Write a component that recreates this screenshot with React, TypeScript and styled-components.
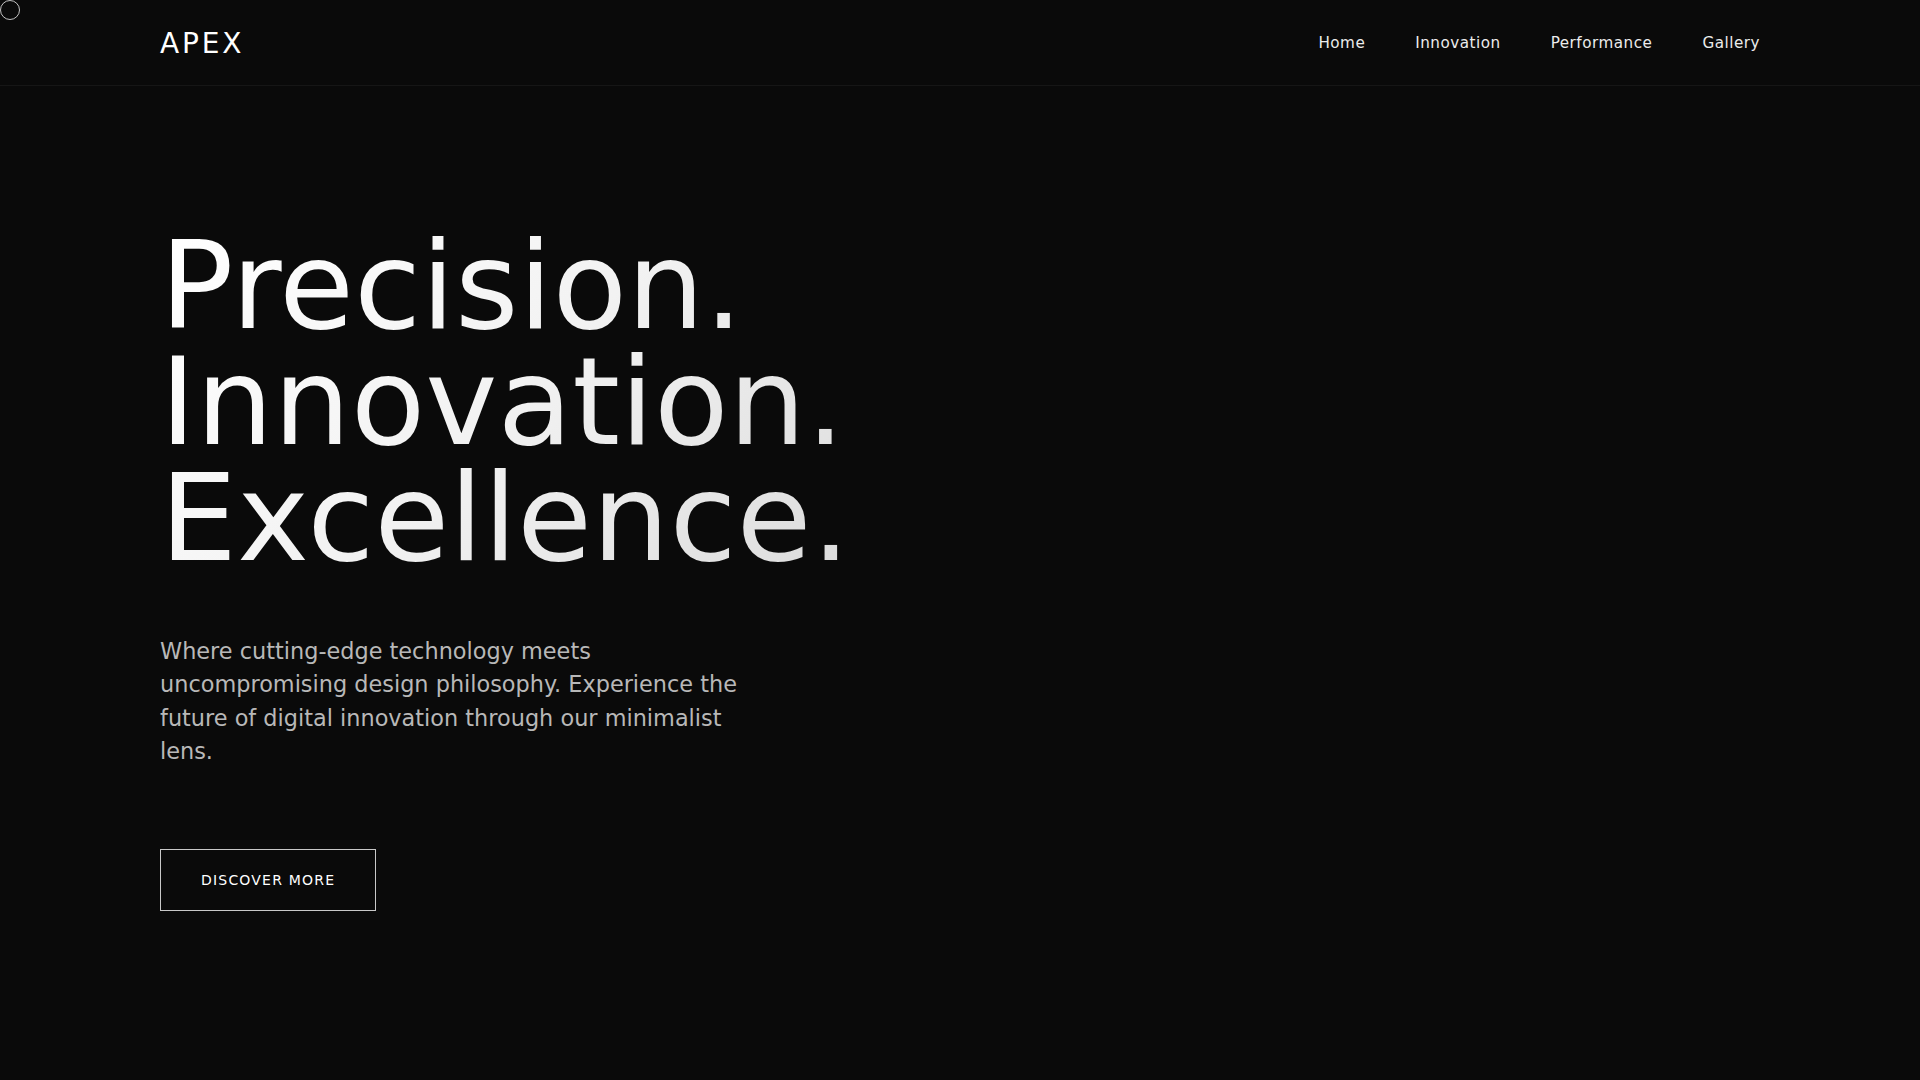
import React from "react";
import styled, { createGlobalStyle } from "styled-components";

const GlobalStyle = createGlobalStyle`
  html, body {
    margin: 0;
    padding: 0;
    background: #0a0a0a;
  }
  body {
    font-family: "DejaVu Sans", "Noto Sans", sans-serif;
    color: #ffffff;
    overflow: hidden;
  }
  * { box-sizing: border-box; }
`;

const Page = styled.div`
  min-height: 100vh;
  background: #0a0a0a;
  display: flex;
  flex-direction: column;
`;

const Cursor = styled.div`
  position: fixed;
  left: 0;
  top: 0;
  width: 20px;
  height: 20px;
  border: 1px solid rgba(255, 255, 255, 0.75);
  border-radius: 50%;
  pointer-events: none;
  z-index: 100;
`;

const Header = styled.header`
  height: 86px;
  padding: 0 160px;
  display: flex;
  align-items: center;
  justify-content: space-between;
  border-bottom: 1px solid rgba(255, 255, 255, 0.05);
  background: #0a0a0a;
`;

const Logo = styled.a`
  margin-top: 2px;
  font-size: 28px;
  letter-spacing: 2.8px;
  color: #ffffff;
  text-decoration: none;
  font-weight: 400;
`;

const Nav = styled.nav`
  display: flex;
  align-items: center;
  gap: 50px;
`;

const NavLink = styled.a`
  font-size: 15.2px;
  letter-spacing: 0.5px;
  color: #ececec;
  text-decoration: none;
`;

const Hero = styled.main`
  flex: 1;
  padding: 143px 160px 0;
  display: flex;
  flex-direction: column;
  align-items: flex-start;
`;

const Title = styled.h1`
  margin: 0;
  font-size: 122px;
  line-height: 0.95;
  font-weight: 400;
  background: linear-gradient(135deg, #ffffff 0%, #f2f2f2 50%, #dcdcdc 100%);
  -webkit-background-clip: text;
  background-clip: text;
  color: transparent;
`;

const TitleLine = styled.span`
  display: block;
`;

const Lead = styled.p`
  margin: 58px 0 0;
  max-width: 600px;
  font-size: 22.4px;
  line-height: 33.6px;
  color: #b8b8b8;
`;

const Button = styled.a`
  margin-top: 80px;
  display: inline-flex;
  align-items: center;
  justify-content: center;
  height: 62px;
  padding: 0 40px;
  border: 1px solid #c8c8c8;
  color: #ffffff;
  font-size: 14px;
  letter-spacing: 1.2px;
  text-transform: uppercase;
  text-decoration: none;
`;

const links = ["Home", "Innovation", "Performance", "Gallery"];

export default function App() {
  return (
    <Page>
      <GlobalStyle />
      <Cursor />
      <Header>
        <Logo href="#">APEX</Logo>
        <Nav>
          {links.map((l) => (
            <NavLink key={l} href="#">
              {l}
            </NavLink>
          ))}
        </Nav>
      </Header>
      <Hero>
        <Title>
          <TitleLine>Precision.</TitleLine>
          <TitleLine>Innovation.</TitleLine>
          <TitleLine>Excellence.</TitleLine>
        </Title>
        <Lead>
          Where cutting-edge technology meets uncompromising design philosophy.
          Experience the future of digital innovation through our minimalist
          lens.
        </Lead>
        <Button href="#">Discover More</Button>
      </Hero>
    </Page>
  );
}
